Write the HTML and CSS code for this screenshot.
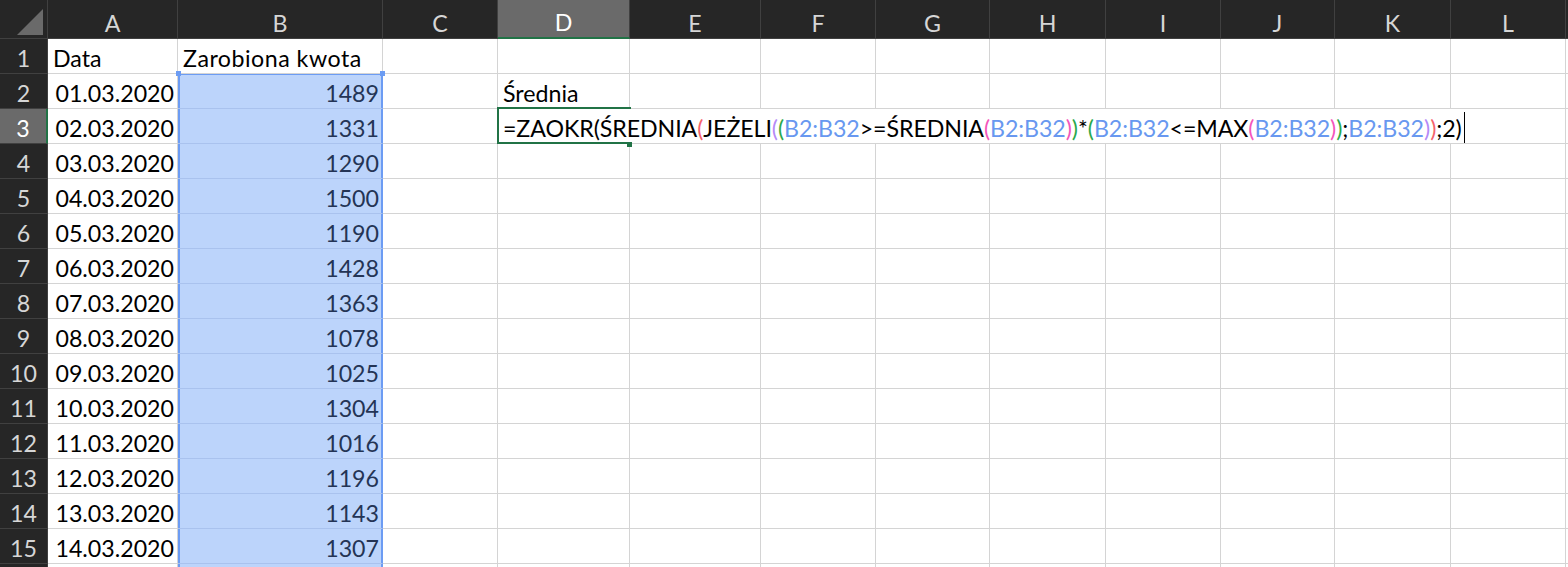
FILE: index.html
```html
<!DOCTYPE html>
<html lang="pl">
<head>
  <meta charset="UTF-8">
  <title>Arkusz</title>
  <link rel="stylesheet" href="styles.css">
</head>
<body>
  <!-- Arkusz: nagłówki kolumn + wiersze 1-16 -->
  <div class="sheet">
    <div class="c hd corner"><span class="tri"></span></div>
    <div class="c hd">A</div><div class="c hd">B</div><div class="c hd">C</div>
    <div class="c hd hd-active">D</div><div class="c hd">E</div><div class="c hd">F</div>
    <div class="c hd">G</div><div class="c hd">H</div><div class="c hd">I</div>
    <div class="c hd">J</div><div class="c hd">K</div><div class="c hd">L</div>
    <div class="c hd"></div>

    <div class="c hd">1</div><div class="c">Data</div><div class="c wide">Zarobiona kwota</div>
    <div class="c"></div><div class="c"></div><div class="c"></div><div class="c"></div><div class="c"></div>
    <div class="c"></div><div class="c"></div><div class="c"></div><div class="c"></div><div class="c"></div><div class="c"></div>

    <div class="c hd">2</div><div class="c num">01.03.2020</div>
    <div class="c num sel sel-first">1489<span class="handle left"></span><span class="handle right"></span></div>
    <div class="c"></div><div class="c">Średnia</div><div class="c"></div><div class="c"></div><div class="c"></div>
    <div class="c"></div><div class="c"></div><div class="c"></div><div class="c"></div><div class="c"></div><div class="c"></div>

    <div class="c hd rh-active">3</div><div class="c num">02.03.2020</div><div class="c num sel">1331</div>
    <div class="c"></div>
    <div class="c editing">
      <span class="editor">=ZAOKR(ŚREDNIA<b class="p1">(</b>JEŻELI<b class="p2">(</b><b class="p3">(</b><b class="ref">B2:B32</b>&gt;=ŚREDNIA<b class="p4">(</b><b class="ref">B2:B32</b><b class="p4">)</b><b class="p3">)</b>*<b class="p3">(</b><b class="ref">B2:B32</b>&lt;=MAX<b class="p4">(</b><b class="ref">B2:B32</b><b class="p4">)</b><b class="p3">)</b>;<b class="ref">B2:B32</b><b class="p2">)</b><b class="p1">)</b>;2)<i class="caret"></i></span>
      <span class="frame"></span>
      <span class="fill-handle"></span>
    </div>
    <div class="c"></div><div class="c"></div><div class="c"></div><div class="c"></div><div class="c"></div>
    <div class="c"></div><div class="c"></div><div class="c"></div><div class="c"></div>

    <div class="c hd">4</div><div class="c num">03.03.2020</div><div class="c num sel">1290</div>
    <div class="c"></div><div class="c"></div><div class="c"></div><div class="c"></div><div class="c"></div>
    <div class="c"></div><div class="c"></div><div class="c"></div><div class="c"></div><div class="c"></div><div class="c"></div>

    <div class="c hd">5</div><div class="c num">04.03.2020</div><div class="c num sel">1500</div>
    <div class="c"></div><div class="c"></div><div class="c"></div><div class="c"></div><div class="c"></div>
    <div class="c"></div><div class="c"></div><div class="c"></div><div class="c"></div><div class="c"></div><div class="c"></div>

    <div class="c hd">6</div><div class="c num">05.03.2020</div><div class="c num sel">1190</div>
    <div class="c"></div><div class="c"></div><div class="c"></div><div class="c"></div><div class="c"></div>
    <div class="c"></div><div class="c"></div><div class="c"></div><div class="c"></div><div class="c"></div><div class="c"></div>

    <div class="c hd">7</div><div class="c num">06.03.2020</div><div class="c num sel">1428</div>
    <div class="c"></div><div class="c"></div><div class="c"></div><div class="c"></div><div class="c"></div>
    <div class="c"></div><div class="c"></div><div class="c"></div><div class="c"></div><div class="c"></div><div class="c"></div>

    <div class="c hd">8</div><div class="c num">07.03.2020</div><div class="c num sel">1363</div>
    <div class="c"></div><div class="c"></div><div class="c"></div><div class="c"></div><div class="c"></div>
    <div class="c"></div><div class="c"></div><div class="c"></div><div class="c"></div><div class="c"></div><div class="c"></div>

    <div class="c hd">9</div><div class="c num">08.03.2020</div><div class="c num sel">1078</div>
    <div class="c"></div><div class="c"></div><div class="c"></div><div class="c"></div><div class="c"></div>
    <div class="c"></div><div class="c"></div><div class="c"></div><div class="c"></div><div class="c"></div><div class="c"></div>

    <div class="c hd">10</div><div class="c num">09.03.2020</div><div class="c num sel">1025</div>
    <div class="c"></div><div class="c"></div><div class="c"></div><div class="c"></div><div class="c"></div>
    <div class="c"></div><div class="c"></div><div class="c"></div><div class="c"></div><div class="c"></div><div class="c"></div>

    <div class="c hd">11</div><div class="c num">10.03.2020</div><div class="c num sel">1304</div>
    <div class="c"></div><div class="c"></div><div class="c"></div><div class="c"></div><div class="c"></div>
    <div class="c"></div><div class="c"></div><div class="c"></div><div class="c"></div><div class="c"></div><div class="c"></div>

    <div class="c hd">12</div><div class="c num">11.03.2020</div><div class="c num sel">1016</div>
    <div class="c"></div><div class="c"></div><div class="c"></div><div class="c"></div><div class="c"></div>
    <div class="c"></div><div class="c"></div><div class="c"></div><div class="c"></div><div class="c"></div><div class="c"></div>

    <div class="c hd">13</div><div class="c num">12.03.2020</div><div class="c num sel">1196</div>
    <div class="c"></div><div class="c"></div><div class="c"></div><div class="c"></div><div class="c"></div>
    <div class="c"></div><div class="c"></div><div class="c"></div><div class="c"></div><div class="c"></div><div class="c"></div>

    <div class="c hd">14</div><div class="c num">13.03.2020</div><div class="c num sel">1143</div>
    <div class="c"></div><div class="c"></div><div class="c"></div><div class="c"></div><div class="c"></div>
    <div class="c"></div><div class="c"></div><div class="c"></div><div class="c"></div><div class="c"></div><div class="c"></div>

    <div class="c hd">15</div><div class="c num">14.03.2020</div><div class="c num sel">1307</div>
    <div class="c"></div><div class="c"></div><div class="c"></div><div class="c"></div><div class="c"></div>
    <div class="c"></div><div class="c"></div><div class="c"></div><div class="c"></div><div class="c"></div><div class="c"></div>

    <!-- wiersz 16 widoczny tylko jako pasek u dołu -->
    <div class="c hd"></div><div class="c"></div><div class="c sel"></div>
    <div class="c"></div><div class="c"></div><div class="c"></div><div class="c"></div><div class="c"></div>
    <div class="c"></div><div class="c"></div><div class="c"></div><div class="c"></div><div class="c"></div><div class="c"></div>
  </div>
</body>
</html>
```

FILE: styles.css
```css
/* Ogólne */
body {
  margin: 0;
  background: #fff;
  overflow: hidden;
  font-family: Lato, "Liberation Sans", sans-serif;
  font-size: 23.2px;
}

/* Siatka arkusza */
.sheet {
  display: grid;
  grid-template-columns: 48px 130px 205px 115px 132px 131px 115px 114px 116px 115px 114px 116px 115px 40px;
  grid-template-rows: 39px;
  grid-auto-rows: 35px;
  height: 567px;
  overflow: hidden;
}
.c {
  box-sizing: border-box;
  border-right: 1px solid #d4d4d4;
  border-bottom: 1px solid #d4d4d4;
  display: flex;
  align-items: flex-end;
  padding: 0 5px 1px;
  line-height: 27px;
  white-space: nowrap;
  color: #000;
}
.wide {
  letter-spacing: 0.5px;
}
.num {
  justify-content: flex-end;
  padding-right: 3px;
}

/* Nagłówki wierszy i kolumn */
.hd {
  background: #262626;
  color: #d6d6d6;
  justify-content: center;
  padding: 0 0 1px;
  border-color: #404040;
}
.corner {
  position: relative;
}
.tri {
  position: absolute;
  right: 4px;
  bottom: 3px;
  width: 0;
  height: 0;
  border-left: 26px solid transparent;
  border-bottom: 26px solid #6a6a6a;
}
.hd-active {
  background: #6a6a6a;
  color: #fff;
  border-bottom: 2px solid #217346;
}
.rh-active {
  background: #6a6a6a;
  color: #fff;
  border-right: 2px solid #217346;
}

/* Zaznaczenie B2:B16 */
.sel {
  background: #bcd4fb;
  color: #243455;
  border-right-color: #6c9cf3;
  border-bottom-color: #a9c2ee;
  box-shadow: inset 2px 0 #6c9cf3, inset -1px 0 #6c9cf3;
}
.sel-first {
  position: relative;
  box-shadow: inset 2px 0 #6c9cf3, inset -1px 0 #6c9cf3, inset 0 1px #6c9cf3;
}
.handle {
  position: absolute;
  top: -3px;
  width: 5px;
  height: 5px;
  background: #6c9cf3;
}
.handle.left { left: -2px; }
.handle.right { right: -3px; }

/* Edytowana komórka D3 */
.editing {
  position: relative;
}
.editor {
  position: absolute;
  left: 0;
  top: 0;
  height: 34px;
  box-sizing: border-box;
  padding: 0 0 1px 5px;
  display: flex;
  align-items: flex-end;
  letter-spacing: -0.08px;
  background: #fff;
  z-index: 2;
}
.editor b {
  font-weight: normal;
}
.editor .ref { color: #6898f0; }
.editor .p1 { color: #f5636c; }
.editor .p2 { color: #b58af7; }
.editor .p3 { color: #2aa84c; }
.editor .p4 { color: #f455bb; }
.caret {
  display: inline-block;
  width: 1px;
  height: 31px;
  margin: 0 0 -1px 2px;
  background: #000;
}
.frame {
  position: absolute;
  left: -1px;
  top: -2px;
  width: 132px;
  height: 33px;
  border: 2px solid #217346;
  border-right: none;
  z-index: 3;
}
.fill-handle {
  position: absolute;
  left: 129px;
  top: 33px;
  width: 5px;
  height: 5px;
  background: #217346;
  z-index: 3;
}
```
